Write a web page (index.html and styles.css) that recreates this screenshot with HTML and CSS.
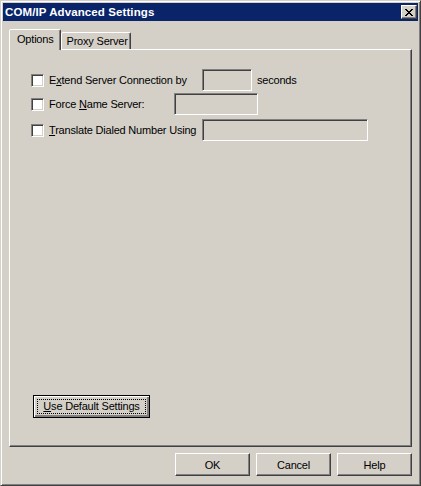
FILE: index.html
```html
<!DOCTYPE html>
<html lang="en">
<head>
    <meta charset="UTF-8">
    <meta name="viewport" content="width=device-width, initial-scale=1.0">
    <link rel="stylesheet" href="styles.css">
</head>
<body>
    <div class="window">
        <!-- title bar -->
        <div class="titlebar">
            <span class="title">COM/IP Advanced Settings</span>
            <button class="close-btn">
                <svg width="8" height="7" viewBox="0 0 8 7">
                    <path d="M0 0h2v1h-2zM6 0h2v1h-2zM1 1h2v1h-2zM5 1h2v1h-2zM2 2h4v1h-4zM3 3h2v1h-2zM2 4h4v1h-4zM1 5h2v1h-2zM5 5h2v1h-2zM0 6h2v1h-2zM6 6h2v1h-2z" fill="#000"/>
                </svg>
            </button>
        </div>

        <div class="content">
            <!-- tabs -->
            <div class="tabs">
                <div class="tab active">Options</div>
                <div class="tab">Proxy Server</div>
            </div>

            <div class="panel">
                <div class="option row1">
                    <span class="checkbox"></span>
                    <label class="opt-label w153">E<u>x</u>tend Server Connection by</label>
                    <span class="field small"></span>
                    <span class="unit">seconds</span>
                </div>
                <div class="option row2">
                    <span class="checkbox"></span>
                    <label class="opt-label w125">Force <u>N</u>ame Server:</label>
                    <span class="field medium"></span>
                </div>
                <div class="option row3">
                    <span class="checkbox"></span>
                    <label class="opt-label w153"><u>T</u>ranslate Dialed Number Using</label>
                    <span class="field large"></span>
                </div>

                <button class="btn default-btn"><span class="focus"><u>U</u>se Default Settings</span></button>
            </div>

            <!-- bottom buttons -->
            <div class="actions">
                <button class="btn">OK</button>
                <button class="btn">Cancel</button>
                <button class="btn">Help</button>
            </div>
        </div>
    </div>
</body>
</html>
```

FILE: styles.css
```css
/* base */
body {
    margin: 0;
    padding: 0;
    background-color: #d4d0c8;
    font-family: "Liberation Sans", Arial, sans-serif;
    font-size: 11px;
    letter-spacing: -0.2px;
    color: #000;
}

.window {
    width: 421px;
    height: 486px;
    box-sizing: border-box;
    border: 1px solid;
    border-color: #d4d0c8 #404040 #404040 #d4d0c8;
    box-shadow: inset 1px 1px #fff, inset -1px -1px #808080;
    padding: 2px;
    display: flex;
    flex-direction: column;
    background-color: #d4d0c8;
}

/* title bar */
.titlebar {
    height: 18px;
    background-color: #0a246a;
    display: flex;
    align-items: center;
    justify-content: space-between;
    padding: 0 1px 0 2px;
}

.title {
    color: #fff;
    font-weight: bold;
    font-size: 11.5px;
    letter-spacing: 0.1px;
}

.close-btn {
    width: 16px;
    height: 14px;
    padding: 0;
    margin: 0;
    box-sizing: border-box;
    background-color: #d4d0c8;
    border: 1px solid;
    border-color: #fff #404040 #404040 #fff;
    box-shadow: inset -1px -1px #808080;
    display: flex;
    align-items: center;
    justify-content: center;
}

.close-btn svg {
    display: block;
    margin-left: -1px;
}

.content {
    flex: 1;
    display: flex;
    flex-direction: column;
    padding: 8px 6px 0 6px;
}

/* tabs */
.tabs {
    display: flex;
    align-items: flex-end;
    height: 20px;
    position: relative;
    z-index: 1;
}

.tab {
    box-sizing: border-box;
    height: 17px;
    padding: 0 2px 0 5px;
    border: 1px solid;
    border-bottom: none;
    border-color: #fff #404040 transparent #fff;
    box-shadow: inset -1px 0 #808080;
    border-radius: 2px 2px 0 0;
    line-height: 16px;
    background-color: #d4d0c8;
}

.tab.active {
    height: 21px;
    margin-bottom: -1px;
    padding: 0 6px 0 7px;
    line-height: 18px;
}

/* panel */
.panel {
    width: 403px;
    height: 398px;
    box-sizing: border-box;
    border: 1px solid;
    border-color: #fff #404040 #404040 #fff;
    box-shadow: inset -1px -1px #808080;
    display: flex;
    flex-direction: column;
    padding: 0 0 0 21px;
}

.option {
    display: flex;
    align-items: center;
    height: 22px;
}

.row1 {
    margin-top: 19px;
}

.row2 {
    margin-top: 2px;
}

.row3 {
    margin-top: 4px;
}

.checkbox {
    width: 13px;
    height: 13px;
    box-sizing: border-box;
    background-color: #fff;
    border: 1px solid;
    border-color: #808080 #fff #fff #808080;
    box-shadow: inset 1px 1px #404040, inset -1px -1px #d4d0c8;
    margin-right: 5px;
    flex-shrink: 0;
}

.opt-label {
    display: block;
    white-space: nowrap;
}

.w153 {
    width: 153px;
}

.w125 {
    width: 125px;
}

.field {
    height: 22px;
    box-sizing: border-box;
    border: 1px solid;
    border-color: #808080 #fff #fff #808080;
    box-shadow: inset 1px 1px #404040, inset -1px -1px #d4d0c8;
    background-color: #d4d0c8;
}

.field.small {
    width: 50px;
}

.field.medium {
    width: 84px;
}

.field.large {
    width: 166px;
}

.unit {
    margin-left: 5px;
}

/* buttons */
.btn {
    width: 75px;
    height: 23px;
    box-sizing: border-box;
    padding: 0;
    margin: 0;
    font-family: "Liberation Sans", Arial, sans-serif;
    font-size: 11px;
    letter-spacing: -0.2px;
    color: #000;
    background-color: #d4d0c8;
    border: 1px solid;
    border-color: #fff #404040 #404040 #fff;
    box-shadow: inset -1px -1px #808080;
}

.default-btn {
    width: 117px;
    margin-top: auto;
    margin-bottom: 28px;
    margin-left: 2px;
    border: 1px solid #000;
    box-shadow: inset 1px 1px #fff, inset -2px -2px #808080, inset -1px -1px #404040;
    padding: 3px;
}

.default-btn .focus {
    display: block;
    height: 100%;
    box-sizing: border-box;
    border: 1px dotted #000;
    line-height: 13px;
}

.actions {
    display: flex;
    justify-content: flex-end;
    gap: 6px;
    margin-top: 6px;
    width: 403px;
}
```
